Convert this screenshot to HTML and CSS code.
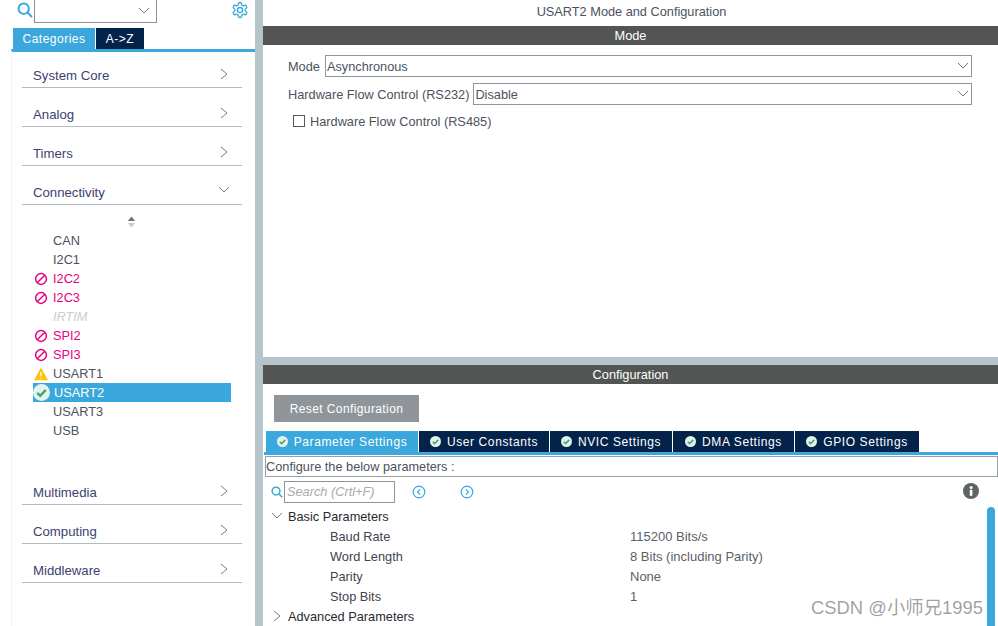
FILE: index.html
```html
<!DOCTYPE html>
<html lang="en">
<head>
<meta charset="utf-8">
<title>USART2 Mode and Configuration</title>
<link rel="stylesheet" href="styles.css">
</head>
<body>
<svg class="defs" width="0" height="0" aria-hidden="true">
  <symbol id="right" viewBox="0 0 8 12"><path d="M1 1l6 5-6 5" fill="none" stroke="currentColor" stroke-width="1"/></symbol>
  <symbol id="down" viewBox="0 0 12 8"><path d="M1 1l5 5 5-5" fill="none" stroke="currentColor" stroke-width="1"/></symbol>
  <symbol id="ban" viewBox="0 0 14 14"><circle cx="7" cy="7" r="5.4" fill="none" stroke="currentColor" stroke-width="1.5"/><path d="M3.2 10.8l7.6-7.6" stroke="currentColor" stroke-width="1.5"/></symbol>
  <symbol id="ok" viewBox="0 0 12 12"><circle cx="6" cy="6" r="6" fill="#e6f2ec"/><path d="M3 6.2l2.1 2.1L9 4.2" fill="none" stroke="#3fa877" stroke-width="1.7"/></symbol>
  <symbol id="search" viewBox="0 0 16 16"><circle cx="6.7" cy="6.7" r="5.2" fill="none" stroke="currentColor" stroke-width="2"/><path d="M10.5 10.5l4.5 4.5" stroke="currentColor" stroke-width="2"/></symbol>
</svg>
<div class="app">
  <aside class="sidebar">
    <div class="topbar">
      <svg class="top-search"><use href="#search"/></svg>
      <div class="combo"><svg class="chev-down"><use href="#down"/></svg></div>
      <svg class="gear" viewBox="0 0 24 24" fill="none" stroke="currentColor" stroke-width="1.8"><path d="M12.22 2h-.44a2 2 0 0 0-2 2v.18a2 2 0 0 1-1 1.73l-.43.25a2 2 0 0 1-2 0l-.15-.08a2 2 0 0 0-2.73.73l-.22.38a2 2 0 0 0 .73 2.73l.15.1a2 2 0 0 1 1 1.72v.51a2 2 0 0 1-1 1.74l-.15.09a2 2 0 0 0-.73 2.73l.22.38a2 2 0 0 0 2.73.73l.15-.08a2 2 0 0 1 2 0l.43.25a2 2 0 0 1 1 1.73V20a2 2 0 0 0 2 2h.44a2 2 0 0 0 2-2v-.18a2 2 0 0 1 1-1.73l.43-.25a2 2 0 0 1 2 0l.15.08a2 2 0 0 0 2.73-.73l.22-.39a2 2 0 0 0-.73-2.73l-.15-.08a2 2 0 0 1-1-1.74v-.5a2 2 0 0 1 1-1.74l.15-.09a2 2 0 0 0 .73-2.73l-.22-.38a2 2 0 0 0-2.73-.73l-.15.08a2 2 0 0 1-2 0l-.43-.25a2 2 0 0 1-1-1.73V4a2 2 0 0 0-2-2z"/><circle cx="12" cy="12" r="3.4"/></svg>
    </div>
    <div class="side-tabs">
      <div class="side-tab side-tab-active">Categories</div>
      <div class="side-tab side-tab-dark">A-&gt;Z</div>
    </div>
    <div class="panel">
      <div class="cat"><span>System Core</span><svg class="chev-right"><use href="#right"/></svg></div>
      <div class="cat"><span>Analog</span><svg class="chev-right"><use href="#right"/></svg></div>
      <div class="cat"><span>Timers</span><svg class="chev-right"><use href="#right"/></svg></div>
      <div class="cat"><span>Connectivity</span><svg class="chev-open"><use href="#down"/></svg></div>
      <div class="list">
        <svg class="sort" viewBox="0 0 10 12"><path d="M5 0l4 5H1z" fill="#6d7175"/><path d="M1 7h8l-4 5z" fill="#c9cdd0"/></svg>
        <div class="item"><span class="slot"></span>CAN</div>
        <div class="item"><span class="slot"></span>I2C1</div>
        <div class="item item-bad"><svg class="slot-icon"><use href="#ban"/></svg>I2C2</div>
        <div class="item item-bad"><svg class="slot-icon"><use href="#ban"/></svg>I2C3</div>
        <div class="item item-off"><span class="slot"></span>IRTIM</div>
        <div class="item item-bad"><svg class="slot-icon"><use href="#ban"/></svg>SPI2</div>
        <div class="item item-bad"><svg class="slot-icon"><use href="#ban"/></svg>SPI3</div>
        <div class="item"><svg class="slot-icon" viewBox="0 0 14 14"><path d="M7 .6L14 13.2H0z" fill="#fcc30b"/><path d="M7 5v4.6M7 10.4v1.4" stroke="#fff" stroke-width="1.3"/></svg>USART1</div>
        <div class="item item-sel"><svg class="slot-ok"><use href="#ok"/></svg>USART2</div>
        <div class="item"><span class="slot"></span>USART3</div>
        <div class="item"><span class="slot"></span>USB</div>
      </div>
      <div class="cat"><span>Multimedia</span><svg class="chev-right"><use href="#right"/></svg></div>
      <div class="cat"><span>Computing</span><svg class="chev-right"><use href="#right"/></svg></div>
      <div class="cat"><span>Middleware</span><svg class="chev-right"><use href="#right"/></svg></div>
    </div>
  </aside>
  <main class="main">
    <div class="title">USART2 Mode and Configuration</div>
    <div class="bar">Mode</div>
    <section class="mode">
      <div class="field field-mode"><label class="field-label">Mode</label><div class="select"><span>Asynchronous</span><svg class="chev-down"><use href="#down"/></svg></div></div>
      <div class="field field-flow"><label class="field-label">Hardware Flow Control (RS232)</label><div class="select"><span>Disable</span><svg class="chev-down"><use href="#down"/></svg></div></div>
      <div class="check-row"><span class="check"></span>Hardware Flow Control (RS485)</div>
    </section>
    <div class="split"></div>
    <div class="bar">Configuration</div>
    <section class="config">
      <div class="reset">Reset Configuration</div>
      <div class="tabs">
        <div class="tab tab-active tab-w1"><svg class="tab-ok"><use href="#ok"/></svg>Parameter Settings</div>
        <div class="tab tab-w2"><svg class="tab-ok"><use href="#ok"/></svg>User Constants</div>
        <div class="tab tab-w3"><svg class="tab-ok"><use href="#ok"/></svg>NVIC Settings</div>
        <div class="tab tab-w4"><svg class="tab-ok"><use href="#ok"/></svg>DMA Settings</div>
        <div class="tab tab-w5"><svg class="tab-ok"><use href="#ok"/></svg>GPIO Settings</div>
      </div>
      <div class="describe">Configure the below parameters :</div>
      <div class="tools">
        <svg class="tool-search"><use href="#search"/></svg>
        <div class="search-box">Search (Crtl+F)</div>
        <svg class="nav nav-prev" viewBox="0 0 14 14" fill="none" stroke="currentColor"><circle cx="7" cy="7" r="5.8" stroke-width="1.2"/><path d="M8.2 4.3L5.5 7l2.7 2.7" stroke-width="1.2"/></svg>
        <svg class="nav nav-next" viewBox="0 0 14 14" fill="none" stroke="currentColor"><circle cx="7" cy="7" r="5.8" stroke-width="1.2"/><path d="M5.8 4.3L8.5 7l-2.7 2.7" stroke-width="1.2"/></svg>
        <svg class="info" viewBox="0 0 16 16"><circle cx="8" cy="8" r="8" fill="#606364"/><rect x="6.8" y="6.8" width="2.6" height="6" fill="#fff"/><circle cx="8.1" cy="4.4" r="1.5" fill="#fff"/></svg>
      </div>
      <div class="tree">
        <div class="tree-head"><svg class="tree-open"><use href="#down"/></svg>Basic Parameters</div>
        <div class="param"><span class="param-name">Baud Rate</span><span class="param-val">115200 Bits/s</span></div>
        <div class="param"><span class="param-name">Word Length</span><span class="param-val">8 Bits (including Parity)</span></div>
        <div class="param"><span class="param-name">Parity</span><span class="param-val">None</span></div>
        <div class="param"><span class="param-name">Stop Bits</span><span class="param-val">1</span></div>
        <div class="tree-head"><svg class="tree-closed"><use href="#right"/></svg>Advanced Parameters</div>
      </div>
      <div class="scrollbar"></div>
    </section>
    <div class="watermark">CSDN @小师兄1995</div>
  </main>
</div>
</body>
</html>
```

FILE: styles.css
```css
* { box-sizing: border-box; }
html, body { margin: 0; padding: 0; }
body {
  width: 998px;
  height: 626px;
  overflow: hidden;
  background: #fff;
  font-family: "Liberation Sans", Arial, sans-serif;
  font-size: 12.75px;
  color: #4c5260;
}
.defs { position: absolute; }
.app { display: flex; height: 626px; }

/* sidebar */
.sidebar {
  width: 263px;
  flex: none;
  border-right: 8px solid #b6c4cc;
}
.topbar { height: 28px; display: flex; align-items: flex-start; padding-left: 17px; }
.top-search { width: 16px; height: 16px; margin-top: 2px; color: #3aa8dc; flex: none; }
.combo {
  width: 123px;
  height: 23px;
  margin-left: 1px;
  border: 1px solid #8b9297;
  border-top: 0;
  display: flex;
  align-items: center;
  justify-content: flex-end;
  padding-right: 6px;
  color: #70767a;
}
.chev-down { width: 12px; height: 8px; flex: none; color: #70767a; }
.gear { width: 18px; height: 18px; margin: 1px 0 0 74px; color: #3aa8dc; flex: none; }
.side-tabs { height: 21px; display: flex; padding-left: 13px; }
.side-tab {
  height: 21px;
  line-height: 22px;
  text-align: center;
  color: #fff;
  font-size: 12px;
  letter-spacing: 0.5px;
}
.side-tab-active { width: 82px; background: #3aa8dc; margin-right: 1px; }
.side-tab-dark { width: 48px; background: #03234b; }
.panel {
  margin-left: 11px;
  width: 244px;
  height: 577px;
  border-top: 3px solid #3aa8dc;
  border-left: 1px solid #eff1f2;
  padding-left: 10px;
}
.cat {
  width: 220px;
  height: 36px;
  margin-bottom: 3px;
  border-bottom: 1px solid #b4bcc2;
  display: flex;
  justify-content: space-between;
  padding: 15px 14px 0 11px;
  color: #3b4270;
  font-size: 13.2px;
  line-height: 18px;
}
.chev-right { width: 8px; height: 12px; margin-top: 1px; color: #777c80; }
.chev-open { width: 12px; height: 8px; margin: 2px -2px 0 0; color: #777c80; }
.list { height: 261px; margin-top: -3px; padding-top: 11px; margin-bottom: 3px; }
.sort { display: block; width: 9px; height: 12px; margin: 0 0 3px 105px; }
.item {
  width: 198px;
  height: 19px;
  margin-left: 11px;
  display: flex;
  align-items: center;
  line-height: 19px;
}
.slot { width: 20px; flex: none; }
.slot-icon { width: 14px; height: 14px; margin: 0 5px 0 1px; flex: none; }
.item-bad { color: #e6007e; }
.item-off { color: #c8ced4; font-style: italic; }
.item-sel { background: #3aa8dc; color: #fff; }
.slot-ok { width: 17px; height: 17px; margin: 0 4px 0 0; flex: none; }

/* main */
.main { flex: 1; min-width: 0; position: relative; }
.title { height: 26px; line-height: 24px; text-align: center; color: #4c5260; padding-left: 2px; }
.bar {
  height: 19px;
  line-height: 19px;
  background: #535554;
  color: #fff;
  text-align: center;
}
.mode { height: 312px; padding: 10px 26px 0 25px; }
.field { display: flex; align-items: center; height: 22px; margin-bottom: 6px; }
.field-label { white-space: nowrap; margin-right: 4px; }
.field-mode .field-label { margin-right: 5px; }
.select {
  flex: 1;
  height: 22px;
  border: 1px solid #8f9599;
  display: flex;
  align-items: center;
  justify-content: space-between;
  padding: 0 2px 0 1px;
}
.check-row { display: flex; align-items: center; margin-top: 7px; padding-left: 5px; height: 18px; }
.check { width: 12px; height: 12px; border: 1px solid #55595c; margin-right: 5px; flex: none; }
.split { height: 8px; background: #b6c4cc; }

.config { position: relative; height: 242px; padding-top: 11px; }
.reset {
  width: 145px;
  height: 27px;
  margin-left: 11px;
  background: #8f9599;
  color: #fff;
  font-size: 12px;
  line-height: 29px;
  text-align: center;
  letter-spacing: 0.4px;
}
.tabs {
  height: 24px;
  margin: 9px 0 1px 1px;
  padding-left: 2px;
  border-bottom: 3px solid #3aa8dc;
  display: flex;
  gap: 1px;
}
.tab {
  height: 21px;
  background: #03234b;
  color: #fff;
  display: flex;
  align-items: center;
  justify-content: center;
  font-size: 12px;
  letter-spacing: 0.6px;
  white-space: nowrap;
}
.tab-active { background: #3aa8dc; }
.tab-w1 { width: 152px; }
.tab-w2 { width: 130px; }
.tab-w3 { width: 122px; }
.tab-w4 { width: 121px; }
.tab-w5 { width: 124px; }
.tab-ok { width: 11px; height: 11px; margin-right: 6px; flex: none; }
.describe {
  height: 21px;
  margin-left: 2px;
  border: 1px solid #9a9fa3;
  line-height: 19px;
  padding-left: 0;
}
.tools { height: 29px; display: flex; align-items: flex-start; padding: 4px 0 0 8px; }
.tool-search { width: 12px; height: 12px; margin: 5px 0 0 0; color: #3aa8dc; flex: none; }
.search-box {
  width: 111px;
  height: 22px;
  margin-left: 1px;
  border: 1px solid #8f9599;
  line-height: 20px;
  padding-left: 2px;
  font-style: italic;
  color: #a6abaf;
}
.nav { width: 14px; height: 14px; margin-top: 4px; color: #3aa8dc; flex: none; }
.nav-prev { margin-left: 17px; }
.nav-next { margin-left: 34px; }
.info { width: 16px; height: 16px; margin: 2px 0 0 489px; flex: none; }
.tree { padding-left: 8px; }
.tree-head { height: 20px; display: flex; align-items: center; color: #262a30; }
.tree-open { width: 12px; height: 8px; margin-right: 5px; color: #777c80; flex: none; }
.tree-closed { width: 8px; height: 12px; margin: 0 7px 0 2px; color: #777c80; flex: none; }
.param { height: 20px; display: flex; align-items: center; padding-left: 59px; }
.param-name { width: 300px; color: #3e434e; }
.param-val { color: #5a5f68; font-size: 13px; }
.scrollbar {
  position: absolute;
  left: 724px;
  top: 123px;
  width: 8px;
  height: 119px;
  border-radius: 4px 4px 0 0;
  background: #3aa8dc;
}
.watermark {
  position: absolute;
  left: 548px;
  top: 597px;
  font-family: "Liberation Sans", "Noto Sans CJK SC", sans-serif;
  font-size: 18.4px;
  line-height: 22px;
  color: rgba(130, 130, 130, 0.75);
  white-space: nowrap;
}
```
